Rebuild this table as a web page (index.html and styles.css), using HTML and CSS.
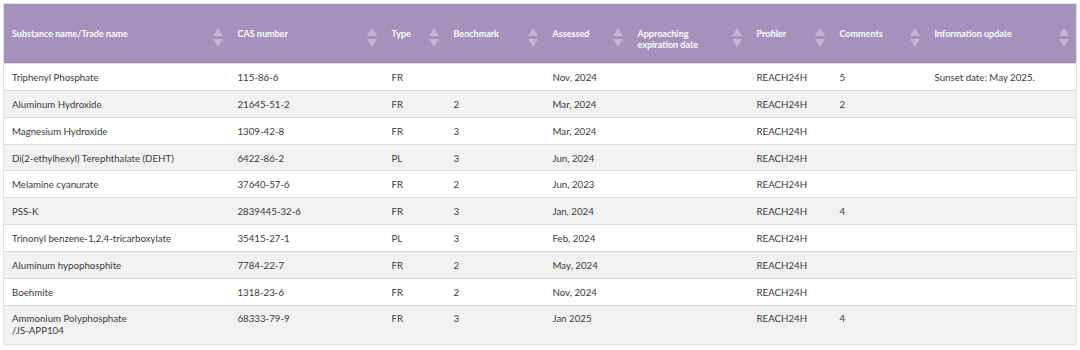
FILE: index.html
```html
<!DOCTYPE html>
<html>
<head>
    <title>Substance Assessment List</title>
    <meta charset="UTF-8">
    <meta name="viewport" content="width=device-width, initial-scale=1.0">
    <link rel="stylesheet" href="styles.css">
</head>
<body>
    <table class="data-table">
        <colgroup>
            <col style="width: 226px">
            <col style="width: 154px">
            <col style="width: 62px">
            <col style="width: 99px">
            <col style="width: 85px">
            <col style="width: 119px">
            <col style="width: 83px">
            <col style="width: 95px">
            <col style="width: 150px">
        </colgroup>
        <thead>
            <tr>
                <th class="sorting">Substance name/Trade name</th>
                <th class="sorting">CAS number</th>
                <th class="sorting">Type</th>
                <th class="sorting">Benchmark</th>
                <th class="sorting">Assessed</th>
                <th class="sorting">Approaching<br>expiration date</th>
                <th class="sorting">Profiler</th>
                <th class="sorting">Comments</th>
                <th class="sorting">Information update</th>
            </tr>
        </thead>
        <tbody>
            <tr>
                <td>Triphenyl Phosphate</td>
                <td>115-86-6</td>
                <td>FR</td>
                <td></td>
                <td>Nov, 2024</td>
                <td></td>
                <td>REACH24H</td>
                <td>5</td>
                <td>Sunset date: May 2025.</td>
            </tr>
            <tr>
                <td>Aluminum Hydroxide</td>
                <td>21645-51-2</td>
                <td>FR</td>
                <td>2</td>
                <td>Mar, 2024</td>
                <td></td>
                <td>REACH24H</td>
                <td>2</td>
                <td></td>
            </tr>
            <tr>
                <td>Magnesium Hydroxide</td>
                <td>1309-42-8</td>
                <td>FR</td>
                <td>3</td>
                <td>Mar, 2024</td>
                <td></td>
                <td>REACH24H</td>
                <td></td>
                <td></td>
            </tr>
            <tr>
                <td>Di(2-ethylhexyl) Terephthalate (DEHT)</td>
                <td>6422-86-2</td>
                <td>PL</td>
                <td>3</td>
                <td>Jun, 2024</td>
                <td></td>
                <td>REACH24H</td>
                <td></td>
                <td></td>
            </tr>
            <tr>
                <td>Melamine cyanurate</td>
                <td>37640-57-6</td>
                <td>FR</td>
                <td>2</td>
                <td>Jun, 2023</td>
                <td></td>
                <td>REACH24H</td>
                <td></td>
                <td></td>
            </tr>
            <tr>
                <td>PSS-K</td>
                <td>2839445-32-6</td>
                <td>FR</td>
                <td>3</td>
                <td>Jan, 2024</td>
                <td></td>
                <td>REACH24H</td>
                <td>4</td>
                <td></td>
            </tr>
            <tr>
                <td>Trinonyl benzene-1,2,4-tricarboxylate</td>
                <td>35415-27-1</td>
                <td>PL</td>
                <td>3</td>
                <td>Feb, 2024</td>
                <td></td>
                <td>REACH24H</td>
                <td></td>
                <td></td>
            </tr>
            <tr>
                <td>Aluminum hypophosphite</td>
                <td>7784-22-7</td>
                <td>FR</td>
                <td>2</td>
                <td>May, 2024</td>
                <td></td>
                <td>REACH24H</td>
                <td></td>
                <td></td>
            </tr>
            <tr>
                <td>Boehmite</td>
                <td>1318-23-6</td>
                <td>FR</td>
                <td>2</td>
                <td>Nov, 2024</td>
                <td></td>
                <td>REACH24H</td>
                <td></td>
                <td></td>
            </tr>
            <tr class="tall">
                <td>Ammonium Polyphosphate<br>/JS-APP104</td>
                <td>68333-79-9</td>
                <td>FR</td>
                <td>3</td>
                <td>Jan 2025</td>
                <td></td>
                <td>REACH24H</td>
                <td>4</td>
                <td></td>
            </tr>
        </tbody>
    </table>
</body>
</html>
```

FILE: styles.css
```css
* {
    margin: 0;
    padding: 0;
    box-sizing: border-box;
}

body {
    font-family: Lato, 'Liberation Sans', sans-serif;
    background: #fff;
    padding: 3px 0 0 3px;
}

.data-table {
    width: 1073px;
    table-layout: fixed;
    border-collapse: collapse;
    border: 1px solid #e2e2e2;
    font-size: 9.7px;
    color: #3a3a3a;
}

.data-table th {
    position: relative;
    height: 60px;
    padding: 24px 24px 0 8px;
    background: #a492bd;
    color: #fff;
    font-size: 9px;
    font-weight: 700;
    line-height: 11px;
    text-align: left;
    vertical-align: top;
}

/* sort arrows */
.sorting::before,
.sorting::after {
    content: '';
    position: absolute;
    right: 7px;
    width: 0;
    height: 0;
    border-left: 5px solid transparent;
    border-right: 5px solid transparent;
}

.sorting::before {
    top: 24px;
    border-bottom: 8px solid #c2b6d4;
}

.sorting::after {
    top: 35px;
    border-top: 8px solid #c2b6d4;
}

.data-table td {
    padding: 8px 8px 7.85px;
    line-height: 10px;
    border-top: 1px solid #dcdcdc;
    vertical-align: top;
}

.data-table tbody tr:nth-child(even) {
    background: #f2f2f2;
}

.data-table tr.tall td {
    padding: 6px 8px 8px;
    line-height: 12px;
}
```
